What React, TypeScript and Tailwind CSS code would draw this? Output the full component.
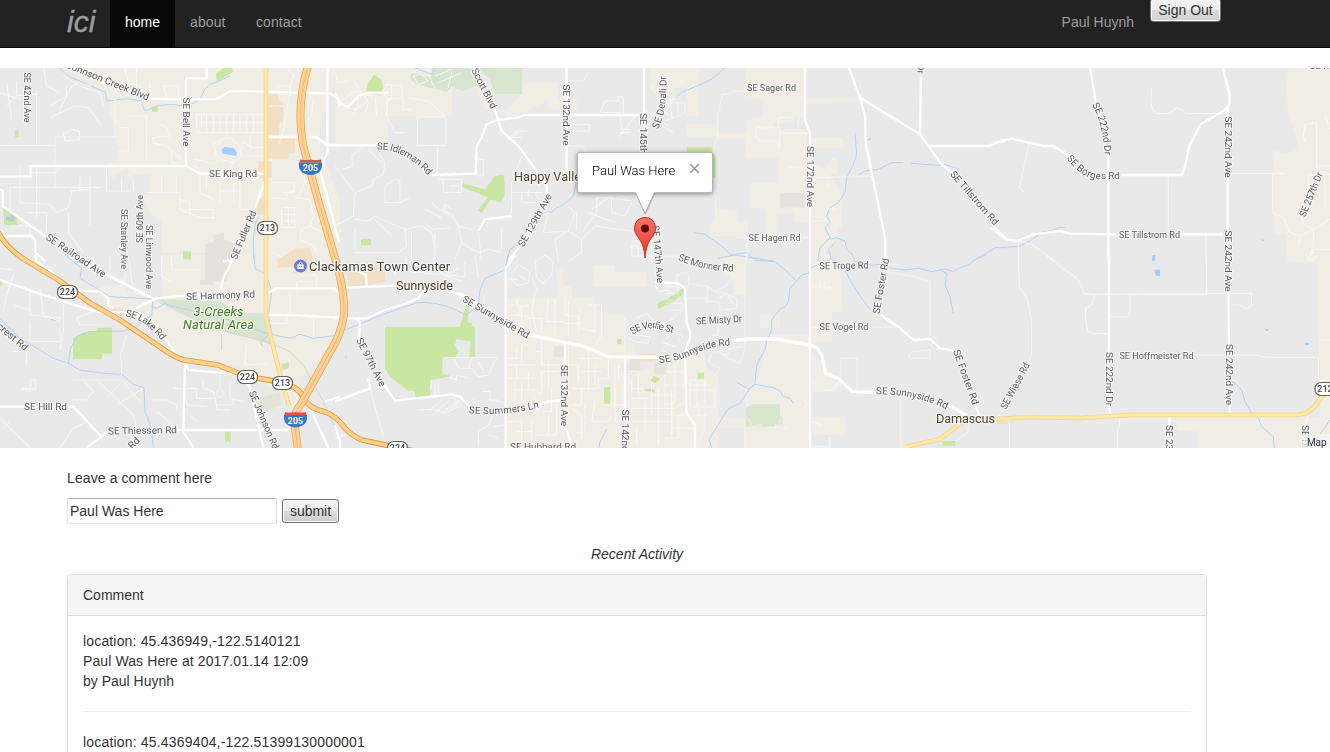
import React from "react";

/* Each sheet is a 340x195 patch of the map, drawn in thirds of a pixel. */
type Sheet = {
  x: number;
  y: number;
  urban?: string;
  shop?: string;
  park?: string;
  wood?: string;
  institution?: string;
  lake?: string;
  stream?: string;
  lane?: string;
  road?: string;
  avenue?: string;
  rail?: string;
};

const sheets: Sheet[] = [
  {
    x: 0,
    y: 66,
    urban:
      "M190 6H1020V60H1000L960 190V250L1020 400V585H700L620 560H485V465L450 440L425 385H450V325H400V300L330 335V290L355 280V240H350V175L330 150V100L300 70L270 50L230 30ZM330 305H345V335H330ZM385 305H400V340H385Z",
    shop:
      "M805 85H835L838 105L850 110V165L838 175V205L805 210ZM805 215H885V262H865V278H805ZM775 285H815V335H775ZM770 410L795 385V445H770ZM880 565H935V585H880Z",
    park: "M648 22L672 6H694L699 18L650 48ZM453 125L473 122V137H458ZM44 193H56V212H44ZM10 425L52 455V478H13ZM549 556H573V580H549Z",
    institution: "M640 508L672 500V520L704 535V585H616V535L640 528Z",
    lake: "M664 250L675 243L700 246L711 258L709 270L688 267L667 262ZM18 450L35 455L33 445L45 455L40 465L18 462Z",
    stream:
      "M178 6L200 26L215 35L250 50L315 78L322 105L380 98L425 105L430 125L436 134L475 118L520 115L560 122L600 100L615 70L630 55L650 48L690 30M778 450L765 475L760 520L762 585",
    lane:
      "M20 50L35 160M50 45V90L20 120M50 90L90 85H110M110 75V238M0 238H165M165 210V293M165 213H350M180 130L215 60L235 50L275 60M150 155L225 120L265 125L305 180M190 200L195 225L240 220L238 195L215 190L190 205M345 98V215M375 6L385 50L420 60L432 100M410 6V80M450 50L452 98M490 60L500 95M490 60H535V98M385 150H440V280M360 185H385V255H355M150 120L200 90L200 60M0 80L60 100M90 320H165L190 295M60 300V410M110 300V415M165 300V370M30 365H300M30 365V440M60 410L150 415L170 440L205 425L215 375L270 370V480M240 330V370M270 330V370M320 300V375H390M365 340V380M400 340V380M205 440V500L250 560M80 440H140V500M110 415V455M30 480H90V510M130 6L140 60L180 80M190 30L240 60L300 80L310 120M455 230L500 240L525 265L550 275M470 235L455 215L500 210L515 225M515 260V290H545M530 270L550 290M480 175L500 185L510 210M590 145V185M605 145V185M620 145V200M640 145V200M660 145V200M680 145V205M700 145V200M720 145V200M740 145V200M760 145V200M585 145H795M600 170H790M590 200H790M650 270L640 235L660 220L690 215L715 235L725 270L700 290L660 280L640 295L610 285L580 280M655 235L665 220M730 240L715 260M690 270L700 290L685 310M580 300L600 310M750 210V245H790M730 230L760 245M735 270H790M485 380H540V400M530 330V380M485 330V380H440M600 330V380M540 400V430L600 455H640M540 400L570 410V450M560 430L640 430V460M620 330V370M660 345V410M700 345V410M660 375H720M720 350V430H760M600 380L640 400M810 120H850M830 60H870V90M860 6L900 50M880 20L850 195L835 235M920 85L940 100L935 150L920 165M815 350H880V380H850M815 395L860 400V380L885 375V350M845 430V485H885V425H845M850 445H885M850 465H885M865 425V485M885 395L930 400L940 450L930 480L905 490L900 520L940 540L950 560M930 480L970 500M890 400L920 340L960 350M820 560L850 575",
    road:
      "M0 332H92V300H558L600 323H797M558 300V37H620V6M450 98L520 100H650L690 75L800 77L895 80L990 82L1010 95L1020 120M797 325L795 345L765 425M700 585L668 585M803 213H948L982 237V6M982 237H1020M982 237V260L972 280L962 320L1018 530M0 370L8 375V420L150 520M10 510H95L106 525V560L135 585",
    avenue: "M225 6L270 30L340 60L450 98",
  },
  {
    x: 0,
    y: 255,
    urban:
      "M485 0H1020V200L960 310L850 420L720 340L545 305L490 250L420 190L340 160L300 120V95L365 90L380 120L440 130L490 128V120ZM850 360L900 370V480L850 440Z",
    shop: "M830 15L890 -20H930L950 50L880 55V35L830 38ZM330 160H370V180H350Z",
    park: "M219 250L255 230L290 228V218H336V296H306V312H219ZM549 -10H573V12H549ZM0 75L8 80L4 92H0ZM846 328L866 320V340L844 346ZM675 530H692V560H675Z",
    wood: "M466 132L660 138L690 158L700 175H790L803 240L812 270L760 252L690 235L640 222Z",
    institution: "M616 0H700L680 80H616ZM760 430L840 415L845 450L790 475ZM600 75H640V90H600Z",
    lake: "M152 190L172 195L170 198L152 194Z",
    stream:
      "M762 0L765 40L800 60L815 110L805 180L815 230L780 262L790 275M195 0L245 40L240 70L290 100L330 125L460 132L455 155L470 160L495 145L520 155L640 180L700 200L800 235L870 250L900 238L940 250L1020 240M460 132L455 180L410 215L370 228L270 230L230 245L212 280L205 325M0 190L60 250L120 285L160 310L205 325L240 345L310 355L365 358L400 388L432 398L435 470L455 520L460 578",
    lane:
      "M0 40L40 45M40 60L20 120L10 170M60 90L90 105V180L185 190M40 150L90 165M120 100L130 180L180 200M90 200V260H180V220M40 290H80V330M190 120V230L180 285M230 190L240 210H310M230 190L280 170M65 400H92V375H107V403H65ZM215 375H365L420 440M250 375L280 410L260 435H215M290 375L400 480L410 520M320 430L365 380M350 450L430 400M460 435H500L530 450V465M520 400H545M560 400H590V430H640M560 430V450L620 455M610 375V400L640 410L650 450H700V430M660 360V400L672 415L660 430L650 420L655 405M690 380V430L730 440M650 450V465H690M0 490L40 530L90 578M0 530L30 500M180 578L220 520L260 500M740 260L735 330M735 330L800 325M860 180V205H810M940 180V240M870 110V180M230 0V20M280 0V60H330M330 0V60L375 80V0M385 0L400 110L460 130M485 0V65L515 80M515 0V45H600M900 60H950V95M890 110V80H940M365 358V330L360 300L380 240M570 480L590 500M470 470L530 520",
    road:
      "M0 75L100 110L240 155L300 172H380L470 130L570 120H660M105 0L110 20L150 45L180 80L215 105L300 110L325 130V150L340 160M410 180L490 240L530 300L555 325L565 345L720 358M555 330L550 530L580 578M700 0L690 30L670 70L660 110M800 117L830 100H1005L1020 120M805 180H870L1020 188M0 455H220L305 545L260 578M305 545L325 530M530 525H880M740 370L755 420L790 578M930 460L985 578M975 440L1020 425M205 0L330 65L460 130",
    rail: "M460 133L640 220L800 260L870 290L910 330L970 440L1020 550M645 222L665 240V285",
  },
  {
    x: 335,
    y: 66,
    urban:
      "M0 6H420L400 65H350V150H160V235H0ZM480 6V130H520V150L450 130L420 70L480 60ZM565 50H670V100H725V130H640V105L520 160L505 140L560 85ZM890 515H985V550H890ZM945 6H1020V100L985 80L945 75Z",
    park: "M117 26L140 42L144 65L135 87L92 82L97 55ZM505 325L509 350V388L498 410L468 400L440 442L428 432L460 395L381 362L382 352L450 370L480 330ZM78 519H108V538H78Z",
    wood: "M290 6H410L428 58L385 75L350 62L335 78L245 55L225 40L230 20L290 35ZM430 6H562V84H480L465 40Z",
    stream: "M725 340L715 390L680 420L665 425L648 440L638 435M590 470L550 535L525 550L515 585M240 6L290 25L300 6",
    lane:
      "M0 20L10 50L40 45M10 110L60 75L85 85L100 110L90 140M60 50L80 85L110 90L145 80L155 55L200 60M70 90V125L50 145M145 80L160 100L200 95L215 120M120 90L125 150M155 100V150M95 110L60 130L30 125L10 140M170 60V95M200 60L205 130M215 95L280 105L330 150M200 130H230M280 25L300 70M350 20L340 65M235 30L260 25L280 45L250 55ZM300 30L350 10M310 50L380 20M247 153H333V238H247ZM160 95L155 150L180 200L210 200M307 240V325M80 245L50 270L55 300L20 310M60 380L0 300M60 380L55 450L0 480M60 380L110 360L115 340L145 325L150 290L125 250M100 250L140 290M150 410H195V345L180 340L150 360V410M310 340H380V380H325V340M345 360H380M195 410L225 395M60 460L100 465L120 450L150 465L210 490L215 540L190 560H60M60 550V490M120 460L170 510M210 490L260 480L290 500L300 545M270 470L290 490L345 485M290 410L310 430L350 445L370 480L410 490M345 450L325 435L330 415L350 430M270 430L320 455M300 500V585M230 495V585M370 480L380 530L430 560L460 550L500 560M430 500L440 585M380 530L360 580M500 490V550M530 350V440L525 450M530 380H620M560 380V410H600M580 370V390M525 215L545 195H575M550 200L530 215H560M545 310L560 270M430 280H445V330H425M795 140L810 105H850V90L865 95V150M800 140H855L860 190H885M850 215L900 150M855 200H885M695 6V45H745L760 20M710 175H765V195H710M695 240H740L760 265M600 380L640 440L625 500L700 495L720 440L700 420M725 440V490M740 500L785 440V395H830V440L870 450L890 410M760 440L840 470M700 495L660 520L670 585M700 495L740 520V560L700 585M770 430L820 395L890 405M740 520L780 480L850 490L890 495M940 160L1010 110M930 130L1000 180M950 60L1000 150M960 100H1020M980 180L1015 200M970 540V585M890 540H950V570H890ZM910 540V570",
    road:
      "M0 238H130M285 327L422 323L425 240L440 215L455 175L485 162L550 155L570 147H925M695 6V315M480 130L490 165L500 195L550 240L605 315L635 355V390M555 540L520 585M927 6V140M0 80L20 115L40 122L70 90L100 80H160M430 495L450 460L530 450",
  },
  {
    x: 335,
    y: 255,
    urban:
      "M515 130H665V40H685V90L710 95V130L780 125V165L870 180V265H900V320L860 320V350L900 355L1020 310V580H515ZM775 30H840V50H935V95H775ZM940 0H985V20H940Z",
    shop: "M40 45L70 30H150V80L70 95H40ZM915 295H965V320H915Z",
    park: "M150 215H375L393 150L403 155L397 200L412 205L410 214H420V305H403L408 260L365 252L360 270L372 290L360 306L322 308V357L342 360L342 365L285 375V424L240 425V408H220L165 365L150 340ZM807 396H826V446H807ZM847 252H860V268H847ZM958 362L976 373L962 384L944 377ZM928 402L955 402L960 412L930 408ZM967 145L975 140L1020 125V140L970 162Z",
    institution: "M657 273H687V305H657ZM885 310H915V345H885ZM958 320H995V358H958Z",
    lake: "M30 303L36 308H30Z",
    stream: "M30 225L140 180L210 155L250 142L300 145L340 155L395 180L430 150L435 105L450 70L510 45L520 0M815 522L795 560L792 578",
    lane:
      "M180 20V60M210 10L225 50L330 60L370 40M300 0L290 40L330 60L380 80M340 60L390 65V20M420 0L430 70M445 120L450 160L475 180V205M530 55L550 30L585 50L580 85L545 90L525 70M550 60L575 75M600 20L630 0L655 20L650 60L625 85L605 70ZM520 70L550 75M590 70L610 110M525 150H555V180H525M545 135L550 160L580 150M560 145V230M600 110L590 170L605 230M640 130L635 200H690M660 130V260M690 120V180L730 185V230M690 205H740M700 140V240M735 165V220L780 230V150M760 150H800V240L780 270M540 180L585 185V230M520 205L570 215M580 190H620V240M545 280V310H515M580 270H560V330H600M620 255V330L655 330M600 290H620M515 330H560M545 330V370H600M580 350V400M640 320V400M620 350H670M655 330H690M515 370H540V450M560 380V440M590 400L620 420V350M540 405H600M650 400V470H620M640 480V540H600M520 500H560V570M545 530H590V570M600 430L610 470M590 500V550M665 450V540H640M700 270V330H730V380M760 285V410M730 310H790M740 350H800M710 400H790V370M740 400V450H710M780 330V390M820 310V370H790M840 320V450H870M850 330V380M880 350H910M890 370V430H940M910 350V420M890 400H925M950 380V480M970 400V570M890 460H1020M930 440V530M890 500H1010M905 520V570M990 360V480M1010 400V540M950 420H1020M750 450V530L720 535M780 440L770 500H820L830 480M840 400V500M710 460L740 480V550M325 308H485L460 360L430 365L410 340H372L355 310M400 340L410 310M430 320L445 345M342 365L365 375V360L400 370M285 400H290V375M300 385V420M310 415V380M440 410H465V435H490M415 430V450M460 435L500 440M250 465L300 462L330 475L380 450L350 425M280 470L320 435M300 472L345 435M320 475L365 440M340 470L370 440M475 475L460 510L430 530V570M475 515L510 510M460 540L490 550M905 190L935 175L960 200M890 240L945 245L940 265L905 262L880 250M960 215L1020 190M960 90L970 110L1000 105L1020 125M870 320V190L895 240M980 260L1020 275M980 285L1010 300M105 400L145 545M0 550L60 530L75 540",
    road:
      "M35 98L180 92L270 105M95 95L93 60L60 45M0 190H95L150 165L200 150L250 130L265 108M60 190L75 200L72 250M148 390L180 437L350 418L375 425L410 460M100 370L105 400L0 440M610 450L640 440L680 435M512 580V40L540 0M690 265V335M690 510L700 540L712 578M870 310V465M385 120L345 110M960 82L1005 85M0 510L15 560V580",
    avenue: "M370 115L400 130L480 180L585 240L690 262L750 275L820 305L980 307",
  },
  {
    x: 665,
    y: 66,
    urban:
      "M0 6H100V150H65V65H0ZM240 6H420V155H385V170H325V190H425V275H435V290L480 310L500 275H515V325H490L530 375V485H520L500 540L460 585H440V470H388V440H300V430L270 425H255V350H340V275H240V220H155V200H245V160H275L295 145V100H240ZM65 175H152V212H65ZM340 95H585V105L420 115ZM440 215H535V247H440ZM155 425L215 435V465H248V510H135V470H150ZM300 425H335V505H300Z",
    park: "M65 243H143V260L152 275V335H143V300H65Z",
    institution: "M345 380H420V425H345Z",
    lake: "M608 220L620 216L610 225Z",
    stream:
      "M180 6L140 40L95 60L50 80L34 92M570 200L575 265L565 295L545 335L540 380L520 410L495 425L485 450L495 470L480 485L495 515L490 520L465 545L458 585M490 520L515 515L540 525L545 550L565 570M510 530L490 550L500 580M580 328L600 315L640 310L680 290L715 290M738 292L820 298L840 295L885 310M85 500L120 505L170 540L195 565L325 585M1020 545H990L950 570L925 585",
    lane:
      "M0 110H60V140L0 165M20 98V155M38 110V140M0 70H5M40 50L60 40M240 65L235 75H205L190 85H172L158 145L157 210L143 260M143 335L152 400V450M273 185V215L285 225H340V250M273 185H345V245M340 155V185M340 155H385M400 155V185M350 202H435M440 335L620 330M490 335V365L480 372M370 303H435M400 370H435M440 450L480 455V465H440M490 430H520M405 515H430M215 515H245V585M0 570H40",
    road:
      "M420 6V165L435 200V585M552 6L585 95L600 150L602 230L622 330L661 520V585M585 95L765 205L830 295L860 320M768 30L765 205M795 240H975L1000 228L1020 225M985 480L1020 515",
  },
  {
    x: 665,
    y: 255,
    urban:
      "M0 310L60 290L120 300L130 360H160V580H0ZM160 10L245 0V120H205V70L180 60ZM440 0H500V30H530V170H500V260H440ZM310 240H435V580H240V520H160V490H240V400L280 370ZM285 178H345V218H285ZM440 290L480 340L520 370V410H440ZM440 485H540V540H440Z",
    park: "M0 135L55 100V118L8 150H0ZM98 353H117V371H98ZM832 558H871V573H832Z",
    wood: "M242 460L262 448H345V485H352V508H330V515H242Z",
    stream:
      "M160 10L245 -8L270 15L330 20L355 40L395 78L375 100L370 140L360 155L345 162L320 195V225L305 260L300 285L275 330L270 385L255 400L225 445L190 460L150 525L132 555L140 578M215 382L250 402L270 388L325 398L345 408L355 425L375 430L385 445M395 78L410 60L430 55L435 40L480 20L500 10L540 45L560 85L590 130L615 162M655 28L680 40L720 45L760 40L800 50L840 42L865 50L880 40L910 30L935 10L965 0M825 45L845 55L840 90L855 125L865 175M560 -5L570 20L620 30L655 28",
    lane:
      "M35 60L65 52L72 65L70 95H35ZM70 85L130 95L150 110L180 115L215 130V160L180 165M130 95L125 140H160L165 165L140 185M150 110L185 90L210 60M160 130L185 115L205 150M165 165L210 160M0 95H40V115H0M0 130L30 140M0 145H50V165H10M20 190L50 170M30 230L55 245L40 260M5 250L30 230M65 130H125M240 30V280L225 325L190 310L160 290L140 295L130 320L165 340L150 360L130 350M155 290L190 300V280L235 275M160 200V240H140M75 375V455M150 405V455H75M75 405H150M75 375H115V405M75 390H130M95 375V455M120 380V450M0 350H60M30 330V440L0 450M0 390H60M20 450V540M0 480H65M40 480V550H0M60 440L30 460M85 480H120V520L100 560M100 440V480M20 520H90M240 515V578M250 490L260 515L290 510M310 515L365 520M345 490V505M440 90H480M440 97H505M465 75V100M480 80V100M490 82V105M440 217H465M610 217H700M670 52L750 65L795 80V240L815 250M795 285L740 290L730 305L740 310H795V285M707 415V578M527 405V310H577V410M525 378L505 405H480M440 380L450 385M415 430L435 455M440 500L470 510M420 450V460M440 575H495M495 545V578M910 510V530L870 560M655 28H700",
    road:
      "M435 0V578M661 0V10M648 178L660 190L700 215L745 255L795 252L825 280L870 288M930 448L945 485M0 82L40 85L60 100L65 200L75 230V250L65 275L60 300L65 475L90 510V578",
    avenue: "M200 257L250 252H330L435 270L455 278L470 300L482 355L520 370L562 410L640 413M845 445L905 482",
  },
  {
    x: 990,
    y: 66,
    urban: "M895 6H1020V585H890V503H855L850 440L848 252L890 265L925 248L915 200L893 145L890 40Z",
    lake: "M487 570L495 565V585H486ZM815 518L822 523L818 526Z",
    stream: "M0 560L15 545L85 542L120 525L160 497L185 495L205 485H228",
    lane: "M485 65L482 100L487 130L500 143H535L562 125L590 142H705M118 230L88 365L105 380M535 325V500M720 322H885M85 525V585M85 525L125 535L195 585M580 502H620M648 500V585M848 325V440L880 455L900 500L930 510L925 540M1005 145L1020 190M945 225L940 210L945 175L980 170V320M955 325V370M955 325H1020M980 300H1020M1005 325V420M935 450L940 475L970 490M930 510L970 490L1020 460M970 490V540L955 585M950 585L975 550H1020",
    road:
      "M300 6L318 110M355 260V585M0 238L30 225L65 218L110 228L160 240H190L240 270M395 327H575L583 310L598 240L632 175L700 135L718 115L719 85L698 6M713 120V155M713 330V490M0 485L50 520L80 525L130 505L210 495L240 503L380 505M570 505H700",
  },
  {
    x: 990,
    y: 255,
    urban: "M893 0H1020V580H990V345L985 250L980 25L893 20ZM385 487H1020V580H620V528H560V500H385Z",
    shop: "M15 495L45 485V500H65V508H20Z",
    lake: "M487 0H496V14L486 18ZM492 44H510V62H498ZM827 221H834V227H827ZM944 263L957 264V270H944Z",
    stream: "M722 378L735 385L755 405L765 440L785 475L805 490L815 515L850 545L853 580M1020 495L985 545L975 580",
    lane: "M85 0L88 95L112 130L125 200V300L110 330M165 0L260 70L272 88L282 115L300 118H650V0M282 118L785 115V150L770 163L750 150H725M315 118L307 148L287 160V190L293 228L315 236H355M420 118V170L410 186H360M610 300H800L830 307H985V375H1020M990 255H1020M58 495V580M388 492V515L382 520V580M0 510L40 465M955 480L950 505M945 0L960 15L975 10L980 0M990 380L1020 365",
    road: "M357 0V290M358 450L360 480M715 110L717 270M718 450L720 480M538 487V510",
  },
];

const layers: { key: keyof Sheet; fill: string; stroke: string; width: number }[] = [
  { key: "urban", fill: "#f0ede5", stroke: "none", width: 0 },
  { key: "institution", fill: "#e3e3dc", stroke: "none", width: 0 },
  { key: "shop", fill: "#f2e0c6", stroke: "none", width: 0 },
  { key: "wood", fill: "#d8e5ce", stroke: "none", width: 0 },
  { key: "park", fill: "#c9e6a2", stroke: "none", width: 0 },
  { key: "lake", fill: "#a3ccff", stroke: "none", width: 0 },
  { key: "stream", fill: "none", stroke: "#b3d2f6", width: 3 },
  { key: "rail", fill: "none", stroke: "#d6d6d6", width: 3 },
  { key: "lane", fill: "none", stroke: "#fafafa", width: 3 },
  { key: "road", fill: "none", stroke: "#ffffff", width: 7 },
  { key: "avenue", fill: "none", stroke: "#ffffff", width: 10 },
];

const arterials = [
  "M266 66V318L272 342L282 382L289 406",
  "M905 447L940 439L965 420M995 419L1030 417L1080 418L1130 415H1295Q1308 415 1315 406L1330 386",
];

const highways = [
  "M-2 232Q5 246 22 258L60 281L90 303L120 320L160 347Q175 358 184 360L218 365L245 376L280 382Q298 386 304 398Q308 408 325 412Q335 415 345 428Q352 436 362 440L395 447L420 452",
  "M308 66Q296 105 303 145L318 200L335 258Q345 290 344 315Q341 335 330 352L301 404Q292 415 295 428L298 450",
];

const straightLabels: [string, number, number, number, number][] = [
  ["SE 42nd Ave", 27, 97.5, 90, 50],
  ["SE Bell Ave", 186.5, 122, 90, 49],
  ["SE King Rd", 233, 174, 0, 48],
  ["SE 60th Ave", 140, 219, -90, 48],
  ["SE Stanley Ave", 124, 239, 90, 60],
  ["SE Linwood Ave", 149, 257, 90, 64],
  ["SE Fuller Rd", 243.5, 235, -67, 52],
  ["SE Railroad Ave", 76, 255.5, 34, 70],
  ["Johnson Creek Blvd", 108, 81, 22, 88],
  ["SE Harmony Rd", 220.5, 295.5, -2, 69],
  ["SE Hill Rd", 45.5, 406.5, 0, 43],
  ["SE Thiessen Rd", 142.5, 430.5, -1, 69],
  ["Hillcrest Rd", 7, 332, 40, 52],
  ["Rd", 134, 443, -45, 12],
  ["SE Johnson Rd", 264, 420, 67, 62],
  ["Mt Scott Blvd", 481, 82, 63, 58],
  ["SE 132nd Ave", 566, 115, 90, 61],
  ["SE 145th Ave", 643.5, 143, 90, 60],
  ["SE 129th Ave", 535, 220, -61, 59],
  ["SE 147th Ave", 658, 254, 85, 58],
  ["SE 97th Ave", 371, 362, 63, 53],
  ["SE Sunnyside Rd", 496, 317, 30, 75],
  ["SE 132nd Ave", 564.5, 395.5, 90, 61],
  ["SE 142nd Ave", 625, 440, 90, 61],
  ["SE Hubbard Rd", 543, 447, 0, 66],
  ["SE Misty Dr", 719, 320, -3, 46],
  ["SE Sager Rd", 771.5, 87.5, 0, 49],
  ["SE Hagen Rd", 774.5, 238, 0, 52],
  ["SE 172nd Ave", 810, 176.5, 90, 61],
  ["SE Troge Rd", 844, 265.5, -1, 49],
  ["SE Vogel Rd", 844, 327, 0, 49],
  ["SE Tillstrom Rd", 974.5, 198, 49, 68],
  ["SE Foster Rd", 881, 286, -80, 56],
  ["SE Foster Rd", 966, 377, 70, 58],
  ["SE 242nd Ave", 1228, 147, 90, 61],
  ["SE 242nd Ave", 1228, 261, 90, 61],
  ["SE 242nd Ave", 1229, 374.5, 90, 61],
  ["SE Tillstrom Rd", 1149.5, 234.5, 0, 61],
  ["SE 222nd Dr", 1109, 379, 90, 54],
  ["SE Hoffmeister Rd", 1156.5, 356, 0, 74],
  ["SE Wiese Rd", 1015, 386, -62, 51],
  ["SE 257th Dr", 1311, 194.5, -68, 47],
  ["SE 232nd Dr", 1169, 452, 90, 54],
  ["SE Bluff Rd", 1305, 450, 90, 50],
  ["SE Rugg Rd", 1334, 66, 0, 48],
  ["SE 190th Dr", 920.5, 47, 90, 54],
];

const curvedLabels: [string, string, number][] = [
  ["SE Lake Rd", "M126 313Q148 316 166 341", 47],
  ["SE Idleman Rd", "M377 146L390 147Q415 154 432 175", 62],
  ["SE Denali Dr", "M655 128Q664 110 663 76", 53],
  ["SE Summers Ln", "M469 410Q505 413 540 404", 70],
  ["SE Verlie St", "M631 332Q641 324 656 325L677 331", 45],
  ["SE Monner Rd", "M679 257Q705 268 735 268", 56],
  ["SE Sunnyside Rd", "M659 360Q682 357 694 350Q710 343 733 342", 74],
  ["SE Sunnyside Rd", "M876 391Q915 390 949 407", 74],
  ["SE 222nd Dr", "M1095 103Q1107 125 1108 156", 54],
  ["SE Borges Rd", "M1069 156Q1084 176 1100 176L1123 176", 58],
];

const places: [string, number, number, number][] = [
  ["Clackamas Town Center", 309, 270.5, 141],
  ["Sunnyside", 396, 289.5, 57],
  ["Happy Valley", 514, 180.5, 73],
  ["Damascus", 936, 422.5, 59],
];

function StateShield({ x, y, n }: { x: number; y: number; n: string }) {
  return (
    <g>
      <rect x={x - 10} y={y - 6.5} width="20" height="13" rx="6" fill="#fff" stroke="#636363" strokeWidth="1.2" />
      <text x={x} y={y + 3.2} textAnchor="middle" fontSize="9" fontWeight="500" fill="#444">
        {n}
      </text>
    </g>
  );
}

function InterstateShield({ x, y }: { x: number; y: number }) {
  return (
    <g>
      <path
        d={`M${x - 10.5} ${y - 7.5}Q${x - 5} ${y - 6.5} ${x} ${y - 7.5}Q${x + 5} ${y - 6.5} ${x + 10.5} ${y - 7.5}L${x + 11} ${y - 4.5}H${x - 11}Z`}
        fill="#d9584c"
      />
      <path
        d={`M${x - 11.5} ${y - 4.5}H${x + 11.5}Q${x + 12.5} ${y + 4} ${x + 6} ${y + 6.5}Q${x + 2} ${y + 8} ${x} ${y + 8}Q${x - 2} ${y + 8} ${x - 6} ${y + 6.5}Q${x - 12.5} ${y + 4} ${x - 11.5} ${y - 4.5}Z`}
        fill="#3b78c8"
      />
      <text x={x} y={y + 4.3} textAnchor="middle" fontSize="9" fontWeight="700" fill="#fff">
        205
      </text>
    </g>
  );
}

function MapCanvas() {
  return (
    <svg className="block h-[380px] w-[1330px] font-['Roboto',sans-serif]" viewBox="0 68 1330 380">
      <rect x="0" y="68" width="1330" height="380" fill="#e9e9e9" />
      {layers.map((layer) => (
        <g
          key={layer.key}
          fill={layer.fill}
          stroke={layer.stroke}
          strokeWidth={layer.width}
          strokeLinejoin="round"
          opacity={layer.key === "lane" ? 0.8 : 1}
        >
          {sheets.map((s) =>
            s[layer.key] ? (
              <path
                key={`${s.x}-${s.y}`}
                transform={`translate(${s.x} ${s.y}) scale(0.33333)`}
                d={s[layer.key] as string}
              />
            ) : null,
          )}
        </g>
      ))}
      <g fill="none" strokeLinejoin="round">
        {arterials.map((d) => (
          <g key={d}>
            <path d={d} stroke="#f2d591" strokeWidth="4.6" />
            <path d={d} stroke="#ffe8a5" strokeWidth="3" />
          </g>
        ))}
        <path d={highways[0]} stroke="#e39a36" strokeWidth="5.4" />
        <path d={highways[0]} stroke="#ffd08f" strokeWidth="3.8" />
        <path d={highways[1]} stroke="#eda84c" strokeWidth="8" />
        <path d={highways[1]} stroke="#ffd199" strokeWidth="6.4" />
        <path d={highways[1]} stroke="#f0b25e" strokeWidth="0.8" />
      </g>
      <g fontSize="9.8" fill="#5f5f5f" stroke="#f4f4f4" strokeWidth="2.2" strokeLinejoin="round" paintOrder="stroke">
        {straightLabels.map(([t, x, y, r, len], i) => (
          <text
            key={i}
            transform={`translate(${x} ${y}) rotate(${r})`}
            y="3.3"
            textAnchor="middle"
            textLength={len}
            lengthAdjust="spacingAndGlyphs"
          >
            {t}
          </text>
        ))}
        {curvedLabels.map(([t, d, len], i) => (
          <g key={i}>
            <path id={`street-${i}`} d={d} fill="none" stroke="none" />
            <text dy="3.3" textLength={len}>
              <textPath href={`#street-${i}`} textLength={len}>
                {t}
              </textPath>
            </text>
          </g>
        ))}
      </g>
      <g fontSize="12.8" stroke="#f7f5f0" strokeWidth="2.4" strokeLinejoin="round" paintOrder="stroke">
        {places.map(([t, x, y, len], i) => (
          <text key={t} x={x} y={y} textLength={len} fill={i === 0 ? "#404040" : "#524730"}>
            {t}
          </text>
        ))}
        <g fill="#428226" fontStyle="italic" textAnchor="middle">
          <text x="218.5" y="315.5" textLength="50">
            3-Creeks
          </text>
          <text x="218.5" y="328.5" textLength="71">
            Natural Area
          </text>
        </g>
      </g>
      <circle cx="300.5" cy="266" r="6.5" fill="#6c7ae0" />
      <path d="M297.3 264.5H303.7V269H297.3Z" fill="#fff" />
      <path d="M298.8 264.5V263.7Q300.5 261 302.2 263.7V264.5" fill="none" stroke="#fff" strokeWidth="1" />
      <path d="M299 266.2Q300.5 268 302 266.2" fill="none" stroke="#6c7ae0" strokeWidth=".7" />
      <StateShield x={267.5} y={228} n="213" />
      <StateShield x={67.5} y={292} n="224" />
      <StateShield x={247.5} y={377} n="224" />
      <StateShield x={282.5} y={383} n="213" />
      <StateShield x={397.5} y={448} n="224" />
      <StateShield x={1325} y={389} n="212" />
      <InterstateShield x={310.5} y={167} />
      <InterstateShield x={295.5} y={419.5} />
      <rect x="1302" y="434" width="28" height="14" fill="#f5f5f5" opacity=".75" />
      <text x="1307" y="446" fontSize="10" fill="#30304a" textLength="19.5">
        Map
      </text>
    </svg>
  );
}

function InfoWindow() {
  return (
    <div className="absolute top-[84px] left-[577px] w-[136px]">
      <div className="flex h-[41px] items-center rounded-[2px] border border-[#b5b5b5] bg-white pb-[4px] pl-[14px] shadow-[0_1px_5px_rgba(0,0,0,0.4)]">
        <span className="w-[84px] font-['Roboto',sans-serif] text-[13px] leading-[18px] font-light whitespace-nowrap text-black">
          Paul Was Here
        </span>
        <svg className="-mt-[4px] ml-[13px] h-[11px] w-[11px]" viewBox="0 0 11 11">
          <path d="M1 1L10 10M10 1L1 10" stroke="#9c9c9c" strokeWidth="1.7" />
        </svg>
      </div>
      <svg className="absolute top-[40px] left-[53px] h-[70px] w-[30px]" viewBox="0 0 30 70">
        <defs>
          <linearGradient id="pin" x1="0" y1="0" x2="0" y2="1">
            <stop offset="0" stopColor="#fb7064" />
            <stop offset="1" stopColor="#e8362c" />
          </linearGradient>
        </defs>
        <path d="M7 1L15.5 23L26 1Z" fill="#000" opacity=".16" />
        <path d="M5.5 0L15 21.5L24.5 0Z" fill="#fff" />
        <path d="M5.5 1L15 21.5L24.5 1" fill="none" stroke="#a8a8a8" strokeWidth="1" />
        <path
          d="M15 66C14.3 56 11.8 50 8 45C5.500 41.500 4.500 39.500 4.500 36.500C4.500 30 9 25.500 15 25.500C21 25.500 25.500 30 25.500 36.500C25.500 39.500 24.500 41.500 22 45C18.200 50 15.700 56 15 66Z"
          fill="url(#pin)"
          stroke="#b8352c"
          strokeWidth="1"
        />
        <circle cx="15" cy="36.500" r="4" fill="#5d100b" />
      </svg>
    </div>
  );
}

const buttonFace =
  "rounded-[3px] border border-[#707070] bg-[linear-gradient(#f3f3f3,#ebebeb_50%,#dddddd_50%,#cfcfcf)] text-[14px] leading-[20px] text-[#333] shadow-[inset_0_0_0_1px_#fafafa]";

export default function App() {
  return (
    <div className="flex h-[752px] w-[1330px] flex-col overflow-hidden bg-white font-['Liberation_Sans',Arial,sans-serif] text-[14px] leading-[20px] text-[#333]">
      <nav className="flex h-[48px] shrink-0 items-start border-b border-[#080808] bg-[#222] pl-[67px] text-[#9d9d9d]">
        <a className="w-[43px] pt-[12px] text-[30px] leading-[20px] italic [-webkit-text-stroke:0.4px_#9d9d9d]">ici</a>
        <a className="h-[47px] w-[65px] bg-[#080808] px-[15px] pt-[12px] text-white">home</a>
        <a className="w-[66px] pt-[12px] pl-[15px] tracking-[0.1px]">about</a>
        <a className="px-[15px] pt-[12px] tracking-[0.1px]">contact</a>
        <span className="ml-auto pt-[12px]">Paul Huynh</span>
        <button className={`${buttonFace} -mt-[2px] mr-[109px] ml-[16px] h-[24px] w-[71px]`}>Sign Out</button>
      </nav>

      <section className="relative mt-[20px] h-[380px] shrink-0">
        <MapCanvas />
        <InfoWindow />
      </section>

      <main className="ml-[67px] w-[1140px] pt-[20px]">
        <p className="tracking-[0.1px]">Leave a comment here</p>
        <form className="mt-[10px] flex h-[26px] items-center">
          <input
            className="h-[26px] w-[210px] rounded-[2px] border border-[#dfe4ea] border-t-[#abadb3] bg-white px-[2px] text-[14px]"
            defaultValue="Paul Was Here"
          />
          <button type="button" className={`${buttonFace} ml-[5px] h-[24px] w-[57px]`}>
            submit
          </button>
        </form>
        <p className="mt-[20px] text-center italic">Recent Activity</p>
        <section className="mt-[10px] rounded-[4px] border border-[#ddd] shadow-[0_1px_1px_rgba(0,0,0,0.05)]">
          <h3 className="h-[41px] rounded-t-[3px] border-b border-[#ddd] bg-[#f5f5f5] px-[15px] py-[10px]">Comment</h3>
          <div className="p-[15px]">
            <p className="tracking-[0.16px]">location: 45.436949,-122.5140121</p>
            <p className="tracking-[0.1px]">Paul Was Here at 2017.01.14 12:09</p>
            <p>by Paul Huynh</p>
            <hr className="my-[20px] border-[#eee]" />
            <p className="tracking-[0.18px]">location: 45.4369404,-122.51399130000001</p>
          </div>
        </section>
      </main>
    </div>
  );
}
